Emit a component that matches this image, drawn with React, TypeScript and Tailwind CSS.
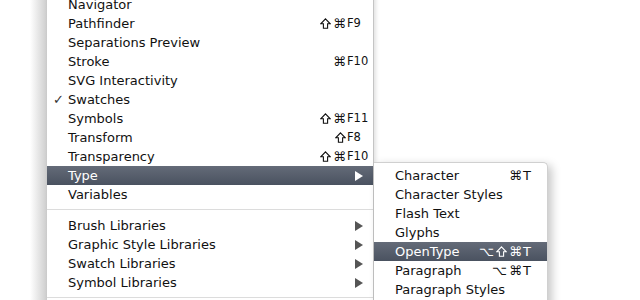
import React from "react";

type Item = {
  label?: string;
  mods?: string;
  key?: string;
  check?: boolean;
  arrow?: boolean;
  active?: boolean;
  sep?: boolean;
};

const main: Item[] = [
  { label: "Navigator" },
  { label: "Pathfinder", mods: "⇧⌘", key: "F9" },
  { label: "Separations Preview" },
  { label: "Stroke", mods: "⌘", key: "F10" },
  { label: "SVG Interactivity" },
  { label: "Swatches", check: true },
  { label: "Symbols", mods: "⇧⌘", key: "F11" },
  { label: "Transform", mods: "⇧", key: "F8" },
  { label: "Transparency", mods: "⇧⌘", key: "F10" },
  { label: "Type", arrow: true, active: true },
  { label: "Variables" },
  { sep: true },
  { label: "Brush Libraries", arrow: true },
  { label: "Graphic Style Libraries", arrow: true },
  { label: "Swatch Libraries", arrow: true },
  { label: "Symbol Libraries", arrow: true },
  { sep: true },
];

const sub: Item[] = [
  { label: "Character", mods: "⌘", key: "T" },
  { label: "Character Styles" },
  { label: "Flash Text" },
  { label: "Glyphs" },
  { label: "OpenType", mods: "⌥⇧⌘", key: "T", active: true },
  { label: "Paragraph", mods: "⌥⌘", key: "T" },
  { label: "Paragraph Styles" },
];

function Arrow({ white }: { white?: boolean }) {
  return (
    <svg width="8" height="10" viewBox="0 0 8 10" className="block">
      <path d="M0 0 L8 5 L0 10 Z" fill={white ? "#ffffff" : "#555555"} />
    </svg>
  );
}

function Shift() {
  return (
    <svg width="11" height="11" viewBox="0 0 11 11" className="block">
      <path
        d="M5.5 0.8 L10.2 5.8 H7.6 V10.3 H3.4 V5.8 H0.8 Z"
        fill="none"
        stroke="currentColor"
        strokeWidth="1.1"
        strokeLinejoin="miter"
      />
    </svg>
  );
}

function Mods({ s }: { s: string }) {
  return (
    <div className="flex items-center justify-end gap-[2px]">
      {Array.from(s).map((c, i) =>
        c === "⇧" ? (
          <Shift key={i} />
        ) : (
          <span key={i} className="text-[13px] leading-none">
            {c}
          </span>
        )
      )}
    </div>
  );
}

function Row({
  it,
  modW,
  keyW,
  keyCls,
}: {
  it: Item;
  modW: string;
  keyW: string;
  keyCls: string;
}) {
  if (it.sep) {
    return (
      <div className="h-[12px] flex items-start pt-[5px]">
        <div className="h-px w-full bg-[#dcdcdc]" />
      </div>
    );
  }
  return (
    <div
      className={
        "relative h-[19px] flex items-center text-[13px] leading-none " +
        (it.active
          ? "bg-gradient-to-b from-[#646b78] to-[#4a5260] text-white"
          : "text-[#111]")
      }
    >
      <div className="w-[21px] shrink-0 pl-[6px] text-[13px] text-[#333]">
        {it.check ? "✓" : ""}
      </div>
      <div className="flex-1 whitespace-nowrap">{it.label}</div>
      {(it.mods || it.key || it.arrow) && (
        <>
          <div className={modW + " shrink-0"}>{it.mods && <Mods s={it.mods} />}</div>
          <div className={keyW + " shrink-0 pl-[1px] whitespace-nowrap flex items-center " + keyCls}>
            {it.key}
            {it.arrow && (
              <span className="ml-[8px]">
                <Arrow white={it.active} />
              </span>
            )}
          </div>
        </>
      )}
    </div>
  );
}

export default function App() {
  return (
    <div className="relative w-[640px] h-[300px] overflow-hidden bg-white font-['DejaVu_Sans',sans-serif]">
      <div className="flex">
        <div className="w-[30px] shrink-0" />
        <div className="w-[17px] h-[300px] shrink-0 bg-gradient-to-r from-white to-[#cdcdcd]" />
        <div className="w-[327px] -mt-[5px] bg-white border-r border-[#c4c4c4] shadow-[2px_0_4px_rgba(0,0,0,0.12)]">
          {main.map((it, i) => (
            <Row key={i} it={it} modW="w-[50px]" keyW="w-[27px]" keyCls="text-[11.5px]" />
          ))}
        </div>
      </div>
      <div className="absolute left-[374px] top-[162px] w-[174px] h-[160px] bg-white rounded-tr-[5px] border-t border-r border-[#d0d0d0] shadow-[4px_3px_10px_rgba(0,0,0,0.22)] pt-[3px]">
        {sub.map((it, i) => (
          <Row key={i} it={it} modW="w-[50px]" keyW="w-[25px]" keyCls="text-[13px]" />
        ))}
      </div>
    </div>
  );
}
